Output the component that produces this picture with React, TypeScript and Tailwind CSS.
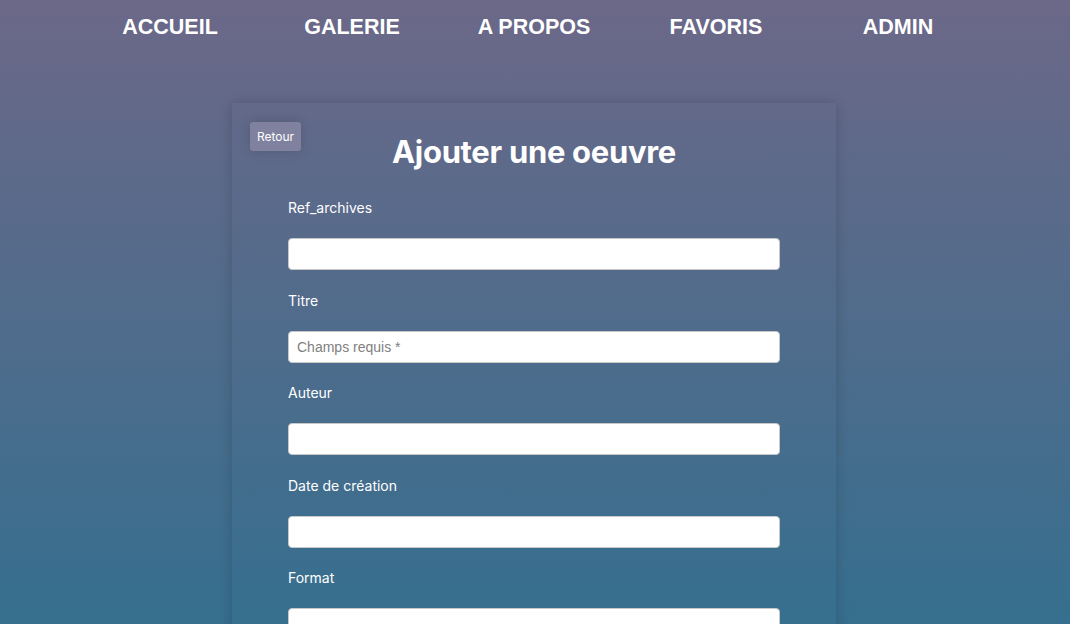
import React from "react";

const navItems = ["ACCUEIL", "GALERIE", "A PROPOS", "FAVORIS", "ADMIN"];
const fields: { label: string; placeholder?: string }[] = [
  { label: "Ref_archives" },
  { label: "Titre", placeholder: "Champs requis *" },
  { label: "Auteur" },
  { label: "Date de création" },
  { label: "Format" },
];

export default function App() {
  return (
    <div className="min-h-screen bg-fixed bg-[linear-gradient(to_bottom,#6c6888,#366f8f)] font-['Inter',sans-serif] text-white">
      <nav className="flex pl-[79px] pr-[81px] pt-[14px] h-[55px]">
        {navItems.map((n) => (
          <a
            key={n}
            className="flex-1 text-center font-['Liberation_Sans',Arial,sans-serif] font-bold text-[21.5px] leading-[26px] text-white"
          >
            {n}
          </a>
        ))}
      </nav>
      <div className="flex justify-center mt-[48px] pr-[2px]">
        <div className="relative w-[604px] pt-[29px] pb-[40px] shadow-[0_0_12px_rgba(0,0,0,0.18)]">
          <button className="absolute left-[18px] top-[19px] h-[29px] w-[51px] rounded-[3px] bg-[#7f819f] text-[12px] text-white shadow-[0_0_12px_rgba(0,0,0,0.15)]">
            Retour
          </button>
          <h1 className="text-center text-[31px] leading-[40px] font-bold tracking-[-0.3px]">
            Ajouter une oeuvre
          </h1>
          <form className="mt-[26px] px-[56px] flex flex-col">
            {fields.map((f) => (
              <div key={f.label} className="flex flex-col mb-[20.5px]">
                <label className="text-[14px] leading-[20px] mb-[20px]">{f.label}</label>
                <input
                  placeholder={f.placeholder}
                  className="h-[32px] w-full rounded-[4px] border border-[#c8c8c8] bg-white px-[8px] text-[14px] text-gray-800 placeholder:text-[#808080] font-['Liberation_Sans',Arial,sans-serif]"
                />
              </div>
            ))}
          </form>
        </div>
      </div>
    </div>
  );
}
